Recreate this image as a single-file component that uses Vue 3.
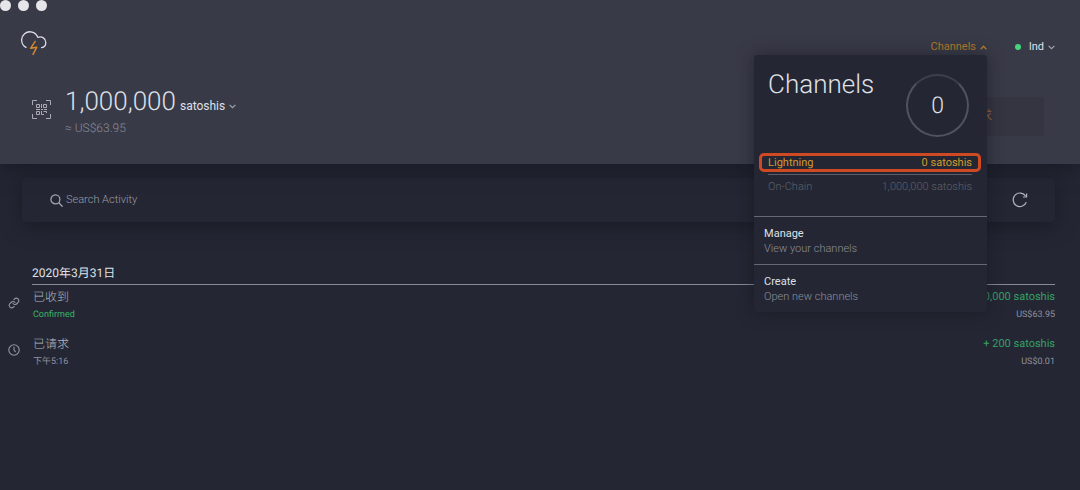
<script setup>
import { ref } from 'vue'

const query = ref('')
const menuOpen = ref(true)

const balances = [
  { name: 'Lightning', amount: '0 satoshis', active: true },
  { name: 'On-Chain', amount: '1,000,000 satoshis', active: false },
]
const actions = [
  { title: 'Manage', hint: 'View your channels' },
  { title: 'Create', hint: 'Open new channels' },
]
const activity = [
  { icon: 'link', title: '已收到', note: 'Confirmed', confirmed: true, sign: '+', amount: '1,000,000 satoshis', fiat: 'US$63.95' },
  { icon: 'clock', title: '已请求', note: '下午5:16', confirmed: false, sign: '+', amount: '200 satoshis', fiat: 'US$0.01' },
]
</script>

<template>
  <div class="app">
    <header class="header">
      <div class="lights"><i></i><i></i><i></i></div>

      <div class="topbar">
        <svg class="logo" width="26" height="26" viewBox="0 0 26 26" fill="none" stroke-linecap="round" stroke-linejoin="round">
          <path d="M5 17.4A8.3 8.3 0 1 1 16.8 7.4C21 5.8 24.800 8.600 24.800 12.400C24.800 15 23 17.200 20.600 17.600" stroke="#dcdde6" stroke-width="1.3" />
          <path d="M14.200 11.400L9.600 18.300L15.800 17.200L12 24.400" stroke="#d88a2c" stroke-width="1.4" />
        </svg>
        <nav class="nav">
          <div class="channels">
            <button class="link gold" type="button" :aria-expanded="menuOpen" @click="menuOpen = !menuOpen">
              Channels
              <svg width="7" height="5" viewBox="0 0 7 5" fill="none" stroke="currentColor" stroke-width="1.4"><path d="M.6 4.2L3.5 1.3L6.4 4.2" /></svg>
            </button>
            <section v-if="menuOpen" class="menu">
              <div class="menu-head">
                <h2>Channels</h2>
                <div class="ring">0</div>
              </div>
              <ul class="balances">
                <li v-for="b in balances" :key="b.name" :class="{ active: b.active }">
                  <span>{{ b.name }}</span><span>{{ b.amount }}</span>
                </li>
              </ul>
              <button v-for="a in actions" :key="a.title" type="button" class="action">
                <span class="action-title">{{ a.title }}</span>
                <span class="action-hint">{{ a.hint }}</span>
              </button>
            </section>
          </div>
          <button class="link" type="button">
            <i class="dot"></i>
            lnd
            <svg width="7" height="5" viewBox="0 0 7 5" fill="none" stroke="#a5a6b0" stroke-width="1.1"><path d="M.6 .8L3.5 3.7L6.4 .8" /></svg>
          </button>
        </nav>
      </div>

      <div class="wallet">
        <svg class="qr" width="19" height="19" viewBox="0 0 19 19" fill="none" stroke="#aaabb5">
          <path d="M.5 5V.5H5M14 .5H18.5V5M18.5 14V18.5H14M5 18.5H.5V14" />
          <path d="M4.5 4.5H7.5V7.5H4.5ZM11.5 4.5H14.5V7.5H11.5ZM4.5 11.5H7.5V14.5H4.5ZM9.5 4V8M4 9.5H8M9 9.5H11M12 9.5H15M9.5 11V14.5H12M11.5 11.5H14.5V13" />
        </svg>
        <div class="funds">
          <div class="sum">
            <span class="big">1,000,000</span>
            <button class="unit" type="button">
              satoshis
              <svg width="7" height="5" viewBox="0 0 7 5" fill="none" stroke="#a5a6b0" stroke-width="1.1"><path d="M.6 .8L3.5 3.7L6.4 .8" /></svg>
            </button>
          </div>
          <div class="fiat">≈ US$63.95</div>
        </div>
        <div class="pay">
          <button type="button">支付</button>
          <button type="button">请求</button>
        </div>
      </div>
    </header>

    <main>
      <div class="search">
        <label for="search" aria-label="Search">
          <svg width="13" height="13" viewBox="0 0 13 13" fill="none" stroke="#a2a3ad" stroke-width="1.3" stroke-linecap="round"><circle cx="5.4" cy="5.4" r="4.5" /><path d="M8.8 8.8L12.2 12.2" /></svg>
        </label>
        <input id="search" v-model="query" type="text" placeholder="Search Activity" />
        <button type="button" class="refresh" aria-label="Refresh">
          <svg width="16" height="16" viewBox="0 0 16 16" fill="none" stroke="#b3b4bd" stroke-width="1.2"><path d="M14.3 10.3A6.8 6.8 0 1 1 13.8 4.3" /><path d="M14.6 1.4V5H11" /></svg>
        </button>
      </div>

      <section class="list">
        <h3>2020年3月31日</h3>
        <article v-for="t in activity" :key="t.title" class="row">
          <svg v-if="t.icon === 'link'" class="row-icon" width="12" height="12" viewBox="0 0 24 24" fill="none" stroke="#9495a0" stroke-width="2.2" stroke-linecap="round"><path d="M10 13a5 5 0 0 0 7.500.5l3-3a5 5 0 0 0-7-7L11.700 5.200" /><path d="M14 11a5 5 0 0 0-7.500-.5l-3 3a5 5 0 0 0 7 7l1.800-1.700" /></svg>
          <svg v-else class="row-icon" width="12" height="12" viewBox="0 0 12 12" fill="none" stroke="#9495a0" stroke-width="1.1" stroke-linecap="round"><circle cx="6" cy="6" r="5.200" /><path d="M6 3V6L7.400 7.600" /></svg>
          <div class="what">
            <div class="title">{{ t.title }}</div>
            <div class="note" :class="{ ok: t.confirmed }">{{ t.note }}</div>
          </div>
          <div class="value">
            <div class="amount">{{ t.sign }} {{ t.amount }}</div>
            <div class="note">{{ t.fiat }}</div>
          </div>
        </article>
      </section>
    </main>
  </div>
</template>

<style>
body { margin: 0; background: #242733; }
</style>

<style scoped>
.app {
  min-height: 100vh;
  background: #242733;
  color: #dfe0e8;
  font: 300 12px/16px Roboto, "Noto Sans CJK SC", sans-serif;
  text-rendering: geometricPrecision;
}
button {
  margin: 0;
  padding: 0;
  border: 0;
  background: none;
  color: inherit;
  font: inherit;
  text-align: left;
  cursor: pointer;
}
svg { display: block; flex: none; }

.header {
  position: relative;
  background: #393a47;
  box-shadow: 0 0 20px rgba(12, 14, 24, 0.6);
  padding-bottom: 26px;
}
.lights { display: flex; gap: 7px; height: 11px; }
.lights i { width: 11px; height: 11px; border-radius: 50%; background: #e6e6ea; }

.topbar {
  display: flex;
  align-items: flex-start;
  justify-content: space-between;
  padding: 19px 25px 0 21px;
}
.nav { display: flex; gap: 28px; padding-top: 9px; }
.channels { position: relative; }
.link { display: flex; align-items: center; gap: 4px; font-size: 11px; font-weight: 400; }
.gold { color: #b57a2b; }
.dot { width: 6px; height: 6px; margin-right: 4px; border-radius: 50%; background: #46d37b; }

.menu {
  position: absolute;
  z-index: 2;
  top: 16px;
  right: 0;
  width: 233px;
  border-radius: 4px;
  background: #242733;
  box-shadow: 0 0 16px rgba(16, 18, 28, 0.5);
}
.menu-head {
  display: flex;
  justify-content: space-between;
  padding: 14px 18px 16px 14px;
}
.menu h2 { margin: 0; font-size: 26px; line-height: 32px; font-weight: 300; }
.ring {
  display: grid;
  place-items: center;
  box-sizing: border-box;
  width: 63px;
  height: 63px;
  margin-top: 5px;
  border: 2px solid #50535f;
  border-top-color: #3d404c;
  border-radius: 50%;
  font-size: 23px;
}
.balances { margin: 0; padding: 0 6px 18px 5px; list-style: none; font-size: 11px; }
.balances li {
  display: flex;
  justify-content: space-between;
  padding: 3px 9px;
  color: #5d606b;
}
.balances .active {
  position: relative;
  margin-bottom: 4px;
  padding: 0 6px;
  border: 3px solid #cf4a22;
  border-radius: 5px;
  color: #d19a2e;
  font-weight: 400;
  line-height: 13px;
}
.balances .active::after {
  content: "";
  position: absolute;
  top: 18px;
  left: 6px;
  right: 6px;
  height: 1px;
  background: #5a5d69;
}
.action {
  display: block;
  width: 100%;
  padding: 9px 10px 8px;
  border-top: 1px solid #666975;
  font-size: 11px;
}
.action span { display: block; line-height: 15px; }
.action-title { font-weight: 400; }
.action-hint { color: #8d8f9a; }

.wallet { display: flex; align-items: center; padding: 30px 36px 0 32px; }
.wallet .qr { align-self: flex-start; margin-top: 14px; }
.funds { flex: 1; padding-left: 14px; }
.sum { display: flex; align-items: baseline; gap: 4px; }
.big { font-size: 26px; line-height: 32px; }
.unit { display: flex; align-items: center; gap: 4px; font-weight: 400; }
.fiat { line-height: 20px; color: #8b8c98; }
.pay { display: flex; margin-top: 8px; border-radius: 4px; background: #343541; }
.pay button { width: 128px; height: 39px; color: #c47b2a; text-align: center; }

.search {
  display: flex;
  align-items: center;
  gap: 3px;
  height: 44px;
  margin: 14px 25px 0 22px;
  padding: 0 27px 0 28px;
  border-radius: 4px;
  background: #242733;
  box-shadow: 0 4px 20px rgba(14, 16, 26, 0.5);
}
.search input {
  flex: 1;
  min-width: 0;
  padding: 0;
  border: 0;
  outline: 0;
  background: none;
  color: #dfe0e8;
  font: inherit;
  font-size: 11px;
}
.search input::placeholder { color: #9b9ca8; opacity: 1; }

.list { padding: 43px 25px 0 8px; }
.list h3 {
  margin: 0 0 0 24px;
  padding-bottom: 3px;
  border-bottom: 1px solid #878995;
  font-size: 12px;
  line-height: 16px;
  font-weight: 400;
}
.row { display: flex; padding: 3px 0 8px; }
.row-icon { margin-top: 9px; }
.what { flex: 1; padding-left: 13px; }
.title { line-height: 18px; color: #b4b5bf; }
.note { line-height: 18px; font-size: 9px; font-weight: 400; color: #9091a0; }
.ok { color: #39b56a; }
.value { text-align: right; }
.amount { line-height: 18px; font-size: 11px; font-weight: 400; color: #36a068; }
</style>
